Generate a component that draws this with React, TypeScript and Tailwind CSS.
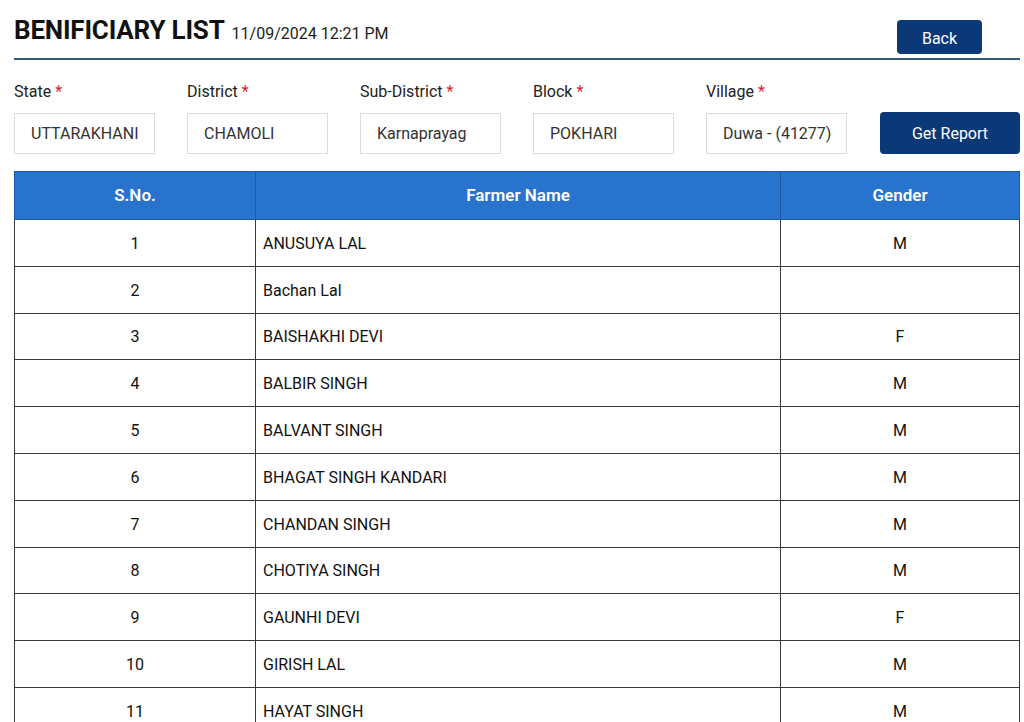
import React from "react";

const filters = [
  { label: "State", value: "UTTARAKHANI" },
  { label: "District", value: "CHAMOLI" },
  { label: "Sub-District", value: "Karnaprayag" },
  { label: "Block", value: "POKHARI" },
  { label: "Village", value: "Duwa - (41277)" },
];

const rows = [
  ["ANUSUYA LAL", "M"],
  ["Bachan Lal", ""],
  ["BAISHAKHI DEVI", "F"],
  ["BALBIR SINGH", "M"],
  ["BALVANT SINGH", "M"],
  ["BHAGAT SINGH KANDARI", "M"],
  ["CHANDAN SINGH", "M"],
  ["CHOTIYA SINGH", "M"],
  ["GAUNHI DEVI", "F"],
  ["GIRISH LAL", "M"],
  ["HAYAT SINGH", "M"],
];

const App = () => {
  return (
    <div className="h-[722px] overflow-hidden bg-white font-['Roboto',sans-serif] text-[#222]">
      <div className="pl-[14px] pr-[4px] pt-[14px]">
        <div className="flex items-start justify-between border-b-2 border-[#2f5c7e] pb-[4px]">
          <h1 className="flex items-baseline gap-[7px] pt-[1px]">
            <span className="text-[26px] font-bold leading-[30px] tracking-[-0.2px] text-[#111]">BENIFICIARY LIST</span>
            <span className="text-[16px] text-[#222]">11/09/2024 12:21 PM</span>
          </h1>
          <button className="mt-[6px] mr-[38px] h-[34px] w-[85px] rounded-[4px] bg-[#0b3877] text-[16px] leading-[37px] text-white">
            Back
          </button>
        </div>

        <div className="mt-[22px] flex items-end">
          {filters.map((f) => (
            <div key={f.label} className="mr-[32px] flex w-[141px] shrink-0 flex-col">
              <label className="text-[16px] leading-[20px] text-[#222]">
                {f.label} <span className="text-[#d9232d]">*</span>
              </label>
              <div className="mt-[11px] flex h-[41px] items-center whitespace-nowrap border border-[#dcdcdc] px-[16px] text-[16px] text-[#333]">
                {f.value}
              </div>
            </div>
          ))}
          <button className="ml-auto h-[42px] w-[140px] shrink-0 rounded-[4px] bg-[#0b3877] text-[16px] leading-[44px] text-white">
            Get Report
          </button>
        </div>

        <table className="mt-[17px] w-[1006px] border-collapse text-[16px]">
          <thead>
            <tr className="h-[48px] bg-[#2773cd] text-white">
              <th className="w-[241px] border border-[#1d5aa3] text-[17px] font-semibold">S.No.</th>
              <th className="w-[525px] border border-[#1d5aa3] text-[17px] font-semibold">Farmer Name</th>
              <th className="border border-[#1d5aa3] text-[17px] font-semibold">Gender</th>
            </tr>
          </thead>
          <tbody>
            {rows.map(([name, g], i) => (
              <tr key={i} className="h-[46.8px]">
                <td className="border border-[#3a3a3a] pt-[2px] text-center text-[#111]">{i + 1}</td>
                <td className="border border-[#3a3a3a] px-[7px] pt-[2px] text-[#111]">{name}</td>
                <td className="border border-[#3a3a3a] pt-[2px] text-center text-[#111]">{g}</td>
              </tr>
            ))}
          </tbody>
        </table>
      </div>
    </div>
  );
};

export default App;
